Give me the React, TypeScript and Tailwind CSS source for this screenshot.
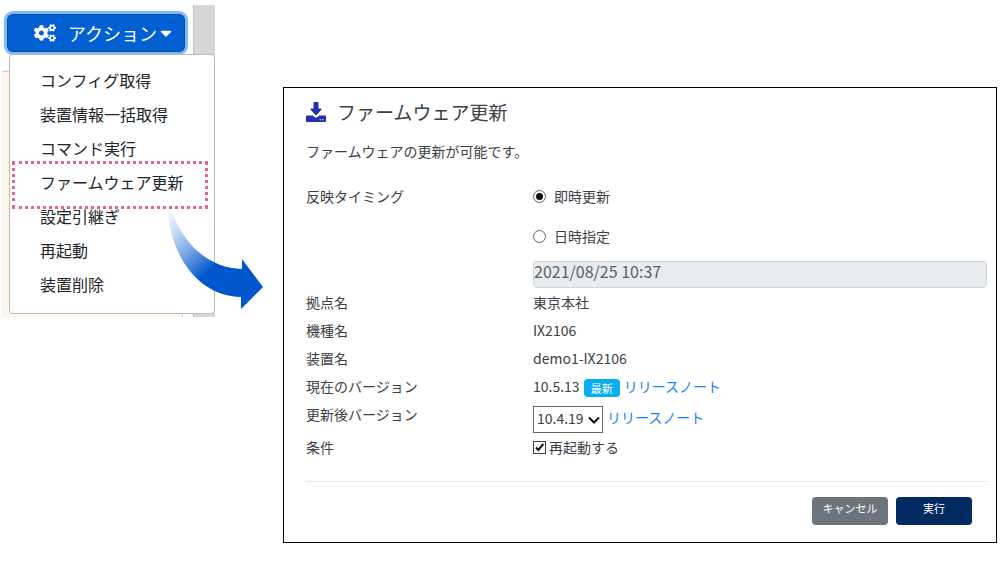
import type { ReactNode } from "react";
import { FaCaretDown, FaCogs } from "react-icons/fa";

const menuItems = [
  "コンフィグ取得",
  "装置情報一括取得",
  "コマンド実行",
  "ファームウェア更新",
  "設定引継ぎ",
  "再起動",
  "装置削除",
];

const HIGHLIGHTED = "ファームウェア更新";

const deviceInfo = [
  { label: "拠点名", value: "東京本社" },
  { label: "機種名", value: "IX2106" },
  { label: "装置名", value: "demo1-IX2106" },
];

const DownloadIcon = () => (
  <svg viewBox="0 0 20 20" className="h-5 w-5 shrink-0 text-[#2430b0]" fill="currentColor" aria-hidden="true">
    <path d="M8.300 0h3.400a.8.8 0 0 1 .8.8V6.500h2.300c.7 0 1 .8.5 1.300l-4.700 5.300a.9.9 0 0 1-1.200 0L4.700 7.800C4.200 7.300 4.500 6.500 5.200 6.500h2.300V.8A.8.8 0 0 1 8.300 0z" />
    <path
      fillRule="evenodd"
      d="M.9 13.500h5.900l1.700 1.500c.8.8 2.200.8 3 0l1.700-1.500h5.900c.5 0 .9.400.9.900v4.700c0 .5-.4.900-.9.900H.9a.9.9 0 0 1-.9-.9v-4.700c0-.5.4-.9.9-.9zM13.500 17.200v1h1.400v-1zM16.100 17.200v1h1.400v-1z"
    />
  </svg>
);

const CurvedArrow = () => (
  <svg viewBox="0 0 100 124" className="pointer-events-none absolute left-[162px] top-[181px] h-[124px] w-[100px]" aria-hidden="true">
    <defs>
      <linearGradient id="arrow-fade" gradientUnits="userSpaceOnUse" x1="2" y1="22" x2="52" y2="80">
        <stop offset="0" stopColor="#0056cc" stopOpacity="0" />
        <stop offset="0.3" stopColor="#0056cc" stopOpacity="0.2" />
        <stop offset="0.6" stopColor="#0056cc" stopOpacity="0.5" />
        <stop offset="1" stopColor="#0056cc" />
      </linearGradient>
    </defs>
    <path d="M3 8C11 48 38 82 78 83V73L99 101L77 123V111C32 110 2 66 3 8Z" fill="url(#arrow-fade)" />
  </svg>
);

const Row = ({ label, children }: { label: string; children: ReactNode }) => (
  <div className="flex items-start leading-7">
    <dt className="w-[227px] shrink-0">{label}</dt>
    <dd className="flex min-w-0 flex-1 items-center">{children}</dd>
  </div>
);

const TimingOption = ({ label, checked }: { label: string; checked?: boolean }) => (
  <label className="flex h-10 items-center gap-2">
    <input
      type="radio"
      name="timing"
      defaultChecked={checked}
      className="grid h-[13px] w-[13px] appearance-none place-items-center rounded-full border border-[#666] bg-white before:h-[7px] before:w-[7px] before:rounded-full checked:before:bg-[#111]"
    />
    {label}
  </label>
);

const ReleaseNote = () => (
  <a href="#release-note" className="ml-1 text-[#1683f5]">
    リリースノート
  </a>
);

const ActionMenu = () => (
  <div className="relative h-[312px] w-[213px] shrink-0 bg-[#d6d6d6] pr-[21px]">
    <div className="flex h-full flex-col border-r border-[#c4c4c4] bg-white">
      <div className="h-[67px] border-b border-[#ccc] pl-[5px] pt-[9px]">
        <button
          type="button"
          className="flex h-[38px] w-[178px] items-center rounded-md border border-dotted border-[#20344f] bg-[#0260d2] pl-[26px] text-lg text-white ring-3 ring-[#7db9fb]"
        >
          <FaCogs size={22} />
          <span className="ml-3">アクション</span>
          <FaCaretDown size={18} />
        </button>
      </div>
      <div className="mr-[10px] flex-1 border-r border-[#ccc] bg-[#fff4e9]" />
    </div>
    <ul className="absolute left-[7px] right-0 top-[49px] rounded border border-[#bbb] bg-white pb-3 pt-2 text-base text-[#212529]">
      {menuItems.map((item) => (
        <li key={item} className="relative">
          <button type="button" className="block h-[34px] w-full pl-[30px] text-left">
            {item}
          </button>
          {item === HIGHLIGHTED && (
            <div className="pointer-events-none absolute -bottom-2.5 -top-1 left-0.5 right-1.5 border-3 border-dotted border-[#e0688a]" />
          )}
        </li>
      ))}
    </ul>
    <CurvedArrow />
  </div>
);

const FirmwareDialog = () => (
  <section className="mt-[82px] min-w-0 flex-1 border border-black bg-white pb-[17px] pl-[22px] pr-[9px] pt-3 text-sm text-[#3c4146]">
    <h1 className="flex items-center gap-[11px] text-[19px] leading-6">
      <DownloadIcon />
      ファームウェア更新
    </h1>
    <p className="mt-[17px] leading-5">ファームウェアの更新が可能です。</p>

    <dl className="mt-[15px]">
      <div className="flex">
        <dt className="w-[227px] shrink-0 leading-10">反映タイミング</dt>
        <dd className="min-w-0 flex-1">
          <TimingOption label="即時更新" checked />
          <TimingOption label="日時指定" />
          <input
            type="text"
            aria-label="更新日時"
            disabled
            defaultValue="2021/08/25 10:37"
            className="mt-[5px] block h-[27px] w-full rounded border border-[#ced4da] bg-[#e9ecef] pb-2 text-base leading-5 text-[#5a6168]"
          />
        </dd>
      </div>
      {deviceInfo.map(({ label, value }) => (
        <Row key={label} label={label}>
          {value}
        </Row>
      ))}
      <Row label="現在のバージョン">
        10.5.13
        <span className="ml-1 mt-1 rounded-sm bg-[#06aeef] px-[7px] text-[11px] leading-[18px] text-white">最新</span>
        <ReleaseNote />
      </Row>
      <Row label="更新後バージョン">
        <div className="relative mt-1.5">
          <select
            aria-label="更新後バージョン"
            defaultValue="10.4.19"
            className="block h-[27px] w-[70px] appearance-none border border-[#666] bg-white pb-1 pl-[3px] text-sm"
          >
            <option>10.4.19</option>
          </select>
          <svg viewBox="0 0 12 8" className="pointer-events-none absolute right-[3px] top-[10px] h-2 w-3" aria-hidden="true">
            <path d="M1 1.500L6 6.500L11 1.500" fill="none" stroke="#111" strokeWidth="2" />
          </svg>
        </div>
        <ReleaseNote />
      </Row>
      <Row label="条件">
        <label className="flex items-center gap-[3px]">
          <span className="relative">
            <input type="checkbox" defaultChecked className="peer block h-[13px] w-[13px] appearance-none border border-[#444] bg-white" />
            <svg viewBox="0 0 13 13" className="pointer-events-none absolute left-0 top-0 hidden h-[13px] w-[13px] peer-checked:block" aria-hidden="true">
              <path d="M3 6.500L5.300 9L10.300 3" fill="none" stroke="#111" strokeWidth="2" />
            </svg>
          </span>
          再起動する
        </label>
      </Row>
    </dl>

    <div className="mt-5 flex justify-end gap-2 border-t border-[#e8e8e8] pr-[15px] pt-[15px] text-[11px] text-white">
      <button type="button" className="h-7 w-[76px] rounded bg-[#6c757d] pb-1">
        キャンセル
      </button>
      <button type="button" className="h-7 w-[76px] rounded bg-[#012a61] pb-1">
        実行
      </button>
    </div>
  </section>
);

export default function App() {
  return (
    <main className="flex min-h-screen items-start gap-[68px] bg-white pb-5 pl-0.5 pr-[3px] pt-[5px] font-['Noto_Sans_CJK_JP',sans-serif]">
      <ActionMenu />
      <FirmwareDialog />
    </main>
  );
}
